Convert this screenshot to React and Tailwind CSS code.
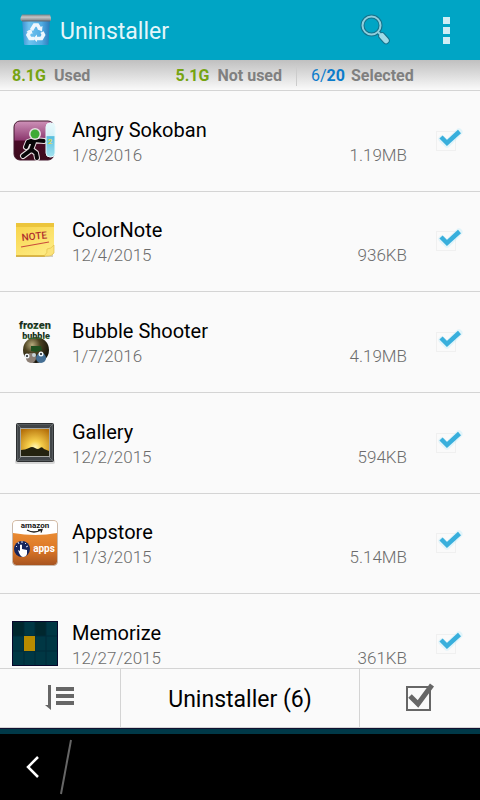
import { useState } from "react";

function TrashIcon() {
  return (
    <svg className="h-8 w-8" viewBox="0 0 32 32" aria-hidden="true">
      <defs>
        <linearGradient id="bin" x1="0" x2="1" y1="0" y2="0">
          <stop offset="0" stopColor="#3a8fd0" />
          <stop offset="0.25" stopColor="#6fc3f0" />
          <stop offset="0.7" stopColor="#4fabe2" />
          <stop offset="1" stopColor="#2a78b8" />
        </linearGradient>
        <linearGradient id="lid" x1="0" x2="0" y1="0" y2="1">
          <stop offset="0" stopColor="#7d8285" />
          <stop offset="0.4" stopColor="#c3c6c8" />
          <stop offset="1" stopColor="#7c8185" />
        </linearGradient>
      </defs>
      <path d="M2 5H30L28.500 30q0 1-1 1H5q-1 0-1-1Z" fill="url(#bin)" />
      <path d="M2 0.500H30L31 4v2q0 1-1 1H1.500L0.500 6V4Z" fill="url(#lid)" />
      <path d="M2 7H30" stroke="#5d6a74" strokeWidth="1" />
      <g fill="none" stroke="#eef7fd" strokeWidth="3.600">
        <path d="m11.500 16 3-5h3l2.500 4" />
        <path d="m22 18 1.500 3-2 3.500h-4.500" />
        <path d="M14 24.500h-4L8 21l2-3.500" />
      </g>
      <path d="m22.500 12-.5 5.500-5-2.500ZM17 20.500v7.500l-4-3.500ZM6.500 17.500l5-2.500 1 5Z" fill="#eef7fd" />
    </svg>
  );
}

function SearchIcon() {
  return (
    <svg className="h-8 w-8" viewBox="0 0 32 32" fill="none" aria-hidden="true">
      <circle cx="11.500" cy="11.500" r="9" stroke="#16718a" strokeWidth="4" />
      <path d="m18 18 4 4" stroke="#16718a" strokeWidth="4" />
      <path d="m22 22 4 4.500" stroke="#16718a" strokeWidth="7.500" strokeLinecap="round" />
      <circle cx="11.500" cy="11.500" r="9" stroke="#8fcfdd" strokeWidth="2" />
      <path d="m18 18 4 4" stroke="#8fcfdd" strokeWidth="2" />
      <path d="m22 22 4 4.500" stroke="#9fdbe8" strokeWidth="5.500" strokeLinecap="round" />
    </svg>
  );
}

function SokobanIcon() {
  return (
    <svg className="h-full w-full" viewBox="0 0 48 48" aria-hidden="true">
      <defs>
        <linearGradient id="wine" x1="0" x2="0" y1="0" y2="1">
          <stop offset="0" stopColor="#cf92b9" />
          <stop offset="0.48" stopColor="#8d3a70" />
          <stop offset="0.52" stopColor="#4a0b27" />
          <stop offset="1" stopColor="#3a0c1c" />
        </linearGradient>
        <linearGradient id="tube" x1="0" x2="0" y1="0" y2="1">
          <stop offset="0" stopColor="#e9f8fb" />
          <stop offset="0.38" stopColor="#d4f2f8" />
          <stop offset="0.4" stopColor="#57bedd" />
          <stop offset="1" stopColor="#a5e3f0" />
        </linearGradient>
      </defs>
      <rect x="4" y="4" width="40" height="39" rx="6" fill="url(#wine)" stroke="#45182f" />
      <g fill="none" strokeLinejoin="round" strokeLinecap="round">
        <path d="m24 25-3 8-8 6M22 33l4 3 1 5M16 30l2-5 6-2 10 1" stroke="#e8e1e3" strokeWidth="6" />
        <path d="m24 25-3 8-8 6M22 33l4 3 1 5M16 30l2-5 6-2 10 1" stroke="#080608" strokeWidth="4" />
      </g>
      <circle cx="25" cy="17" r="6" fill="#eadfe6" />
      <circle cx="25" cy="17" r="4.500" fill="#3faa35" />
      <rect x="36" y="6" width="9" height="34" rx="4" fill="url(#tube)" stroke="#e8fafd" />
      <text x="40" y="27" textAnchor="middle" fontSize="8" fontWeight="700" fill="#ddd84f">2</text>
    </svg>
  );
}

function NoteIcon() {
  return (
    <svg className="h-full w-full" viewBox="0 0 48 48" aria-hidden="true">
      <defs>
        <linearGradient id="paper" x1="0" x2="0.6" y1="0" y2="1">
          <stop offset="0" stopColor="#f8d348" />
          <stop offset="1" stopColor="#fdea80" />
        </linearGradient>
      </defs>
      <path d="M6 39h34l3-3v4H6Z" fill="#b8b19a" opacity="0.6" />
      <path d="M6 6h38v22q-2 7-9 11H6Z" fill="url(#paper)" />
      <path d="M6 6h38v4H6Z" fill="#ecc53c" />
      <path d="M6 39h29" stroke="#d3a92e" strokeWidth="1.500" />
      <path d="M34 39q4-3 3-7 4 0 7-4v8q-2 3-6 3Z" fill="#fbe37a" stroke="#e2c04a" strokeWidth="0.700" />
      <text x="12" y="24" fontSize="10" fontWeight="500" fill="#b0302e" transform="rotate(-6 12 24)">NOTE</text>
      <path d="m11 30 28-5" stroke="#c94c3c" strokeWidth="1.200" />
    </svg>
  );
}

function BubbleIcon() {
  return (
    <svg className="h-full w-full" viewBox="0 0 48 48" aria-hidden="true">
      <defs>
        <radialGradient id="ball" cx="0.35" cy="0.3" r="0.75">
          <stop offset="0" stopColor="#b6aa7d" />
          <stop offset="0.4" stopColor="#4d4322" />
          <stop offset="1" stopColor="#0e0c05" />
        </radialGradient>
        <linearGradient id="slime" x1="0" x2="0" y1="0" y2="1">
          <stop offset="0" stopColor="#101c14" />
          <stop offset="0.6" stopColor="#1d3a22" />
          <stop offset="1" stopColor="#5fae4c" />
        </linearGradient>
      </defs>
      <circle cx="26" cy="32" r="13" fill="url(#ball)" />
      <path d="M21 28h10l1 4-6 2-5-1Z" fill="#1f5020" />
      <ellipse cx="21" cy="40" rx="5" ry="5" fill="#8c7f75" />
      <ellipse cx="31" cy="40" rx="5" ry="5" fill="#456f94" />
      <circle cx="17" cy="38" r="2.500" fill="#eef3f6" />
      <circle cx="24" cy="37" r="2" fill="#c7d4d8" />
      <circle cx="31" cy="36" r="2.500" fill="#eff5f8" />
      <circle cx="17" cy="38" r="1" fill="#101821" />
      <circle cx="31" cy="36" r="1" fill="#101821" />
      <g fontWeight="900" textAnchor="middle" fill="url(#slime)">
        <text x="25" y="11" fontSize="11">frozen</text>
        <text x="26" y="21" fontSize="9">bubble</text>
      </g>
    </svg>
  );
}

function GalleryIcon() {
  return (
    <svg className="h-full w-full" viewBox="0 0 48 48" aria-hidden="true">
      <defs>
        <radialGradient id="sunset" cx="0.5" cy="0.68" r="0.75">
          <stop offset="0" stopColor="#fff8bd" />
          <stop offset="0.3" stopColor="#f7d04c" />
          <stop offset="1" stopColor="#b46f09" />
        </radialGradient>
      </defs>
      <rect x="5" y="40" width="40" height="5" rx="2" fill="#aaa" opacity="0.45" />
      <rect x="6.500" y="4.500" width="37" height="38" rx="1" fill="#555a5d" stroke="#2c2e30" />
      <rect x="8" y="6" width="34" height="35" fill="#414548" />
      <rect x="10.500" y="9.500" width="29" height="28" fill="url(#sunset)" stroke="#a5a6a2" />
      <path d="M11 31q4 0 8-2 3-2 6 0t5 0 4 1l5 2v5H11Z" fill="#24220f" />
      <path d="m7 5 4 4M43 5l-4 4M7 42l4-4M43 42l-4-4" stroke="#777b7e" strokeWidth="0.700" />
    </svg>
  );
}

function AppstoreIcon() {
  return (
    <svg className="h-full w-full" viewBox="0 0 48 48" aria-hidden="true">
      <defs>
        <linearGradient id="orange" x1="0" x2="0" y1="0" y2="1">
          <stop offset="0" stopColor="#f39a3e" />
          <stop offset="0.65" stopColor="#dc7726" />
          <stop offset="1" stopColor="#a65320" />
        </linearGradient>
      </defs>
      <rect x="2.500" y="1.500" width="45" height="45" rx="4" fill="url(#orange)" stroke="#c9b9ac" />
      <path d="M3 5q0-3 3-3h38q3 0 3 3v9q-21 4-44 0Z" fill="#fff" />
      <text x="25" y="9" textAnchor="middle" fontSize="8" fontWeight="700" fill="#151515">amazon</text>
      <path d="M17 11q7 4 14 0m-3 0 4-.5-1 3" fill="none" stroke="#222" strokeWidth="1.300" />
      <circle cx="12" cy="30" r="8" fill="#16265e" />
      <path d="m8 31 2 1v-6q1-1 2 0v4l5 1v4q-1 3-4 3-3 0-5-7Z" fill="#fff" />
      <path d="m6 27 1 1m1-5 1 2m3-3v2m4 0-1 1m3 2-2 1" stroke="#dbe3f5" strokeWidth="1" />
      <text x="34" y="33" textAnchor="middle" fontSize="10" fontWeight="700" fill="#fff">apps</text>
    </svg>
  );
}

function MemorizeIcon() {
  return (
    <svg className="h-full w-full" viewBox="0 0 48 48" aria-hidden="true">
      <rect x="2" y="1" width="46" height="45" fill="#003744" />
      <path d="M3 2h11v14H3ZM25 2h11v14H25Z" fill="#00272e" />
      <path d="M14 2v43M25 2v43M36 2v43M3 16h44M3 31h44" stroke="#002b38" strokeWidth="1" />
      <rect x="2.500" y="1.500" width="45" height="44" fill="none" stroke="#08082c" />
      <rect x="14" y="16" width="11" height="15" fill="#b88b00" />
    </svg>
  );
}

const apps = [
  { name: "Angry Sokoban", date: "1/8/2016", size: "1.19MB", Icon: SokobanIcon },
  { name: "ColorNote", date: "12/4/2015", size: "936KB", Icon: NoteIcon },
  { name: "Bubble Shooter", date: "1/7/2016", size: "4.19MB", Icon: BubbleIcon },
  { name: "Gallery", date: "12/2/2015", size: "594KB", Icon: GalleryIcon },
  { name: "Appstore", date: "11/3/2015", size: "5.14MB", Icon: AppstoreIcon },
  { name: "Memorize", date: "12/27/2015", size: "361KB", Icon: MemorizeIcon },
];

function AppRow({ app, checked, onToggle }) {
  const { Icon } = app;
  return (
    <li className="border-b border-[#d4d4d4]">
      <label className="flex h-full items-center pr-3 pl-2.5">
        <span className="h-12 w-12 shrink-0">
          <Icon />
        </span>
        <span className="ml-3.5 min-w-0 flex-1">
          <span className="block truncate text-[20px] leading-7 text-black">{app.name}</span>
          <span className="flex justify-between text-[17px] leading-[22px] font-light text-[#6c6c6c]">
            <span>{app.date}</span>
            <span>{app.size}</span>
          </span>
        </span>
        <span className="mb-1 ml-[25px] grid h-9 w-9 shrink-0">
          <input
            type="checkbox"
            checked={checked}
            onChange={onToggle}
            className="peer col-start-1 row-start-1 mx-1 my-2.5 h-5 w-5 appearance-none border border-[#f0f0f0]"
          />
          <svg className="pointer-events-none invisible col-start-1 row-start-1 h-9 w-9 peer-checked:visible" viewBox="0 0 36 36" fill="none" aria-hidden="true">
            <path d="m10 18 5 5L27 11" stroke="#c8edfa" strokeWidth="7" opacity="0.5" strokeLinejoin="round" strokeLinecap="round" />
            <path d="m9 16 6 6L27.500 10.500" stroke="#38afdc" strokeWidth="4.500" />
          </svg>
        </span>
      </label>
    </li>
  );
}

export default function App() {
  const [selected, setSelected] = useState(apps.map((app) => app.name));

  const toggle = (name) => {
    setSelected((prev) => (prev.includes(name) ? prev.filter((n) => n !== name) : [...prev, name]));
  };

  const toggleAll = () => {
    setSelected(selected.length === apps.length ? [] : apps.map((app) => app.name));
  };

  return (
    <div className="flex h-screen flex-col bg-[#fafafa] font-[Roboto,'Liberation_Sans',sans-serif]">
      <header className="flex h-15 shrink-0 items-center bg-[#00a5c5] pr-4 pl-5">
        <TrashIcon />
        <h1 className="ml-2 flex-1 pt-1 text-[23px] leading-8 text-[#e4f6fa]">Uninstaller</h1>
        <button type="button" aria-label="Search" className="mr-9">
          <SearchIcon />
        </button>
        <button type="button" aria-label="More options" className="flex w-9 flex-col items-center gap-[3px]">
          <span className="h-[7px] w-[7px] bg-[#cfedf4]" />
          <span className="h-[7px] w-[7px] bg-[#cfedf4]" />
          <span className="h-[7px] w-[7px] bg-[#cfedf4]" />
        </button>
      </header>

      <div className="flex h-[31px] shrink-0 items-center border-b border-[#d4d4d4] bg-linear-to-b from-[#c0c0c0] to-[#fafafa] px-3 pt-0.5 text-[16px] font-bold text-[#808080]">
        <p className="flex flex-1 gap-2">
          <span className="text-[#76a412]">8.1G</span>
          <span>Used</span>
        </p>
        <p className="flex gap-2">
          <span className="text-[#76a412]">5.1G</span>
          <span>Not used</span>
        </p>
        <span className="mx-3.5 h-5 w-px bg-[#cccccc]" />
        <p className="flex w-[157px] gap-1.5">
          <span className="text-[#0b7ccb]">
            <span className="font-normal">{selected.length}/</span>20
          </span>
          <span>Selected</span>
        </p>
      </div>

      <main className="min-h-0 flex-1 overflow-hidden">
        <ul className="grid h-[604px] auto-rows-fr">
          {apps.map((app) => (
            <AppRow
              key={app.name}
              app={app}
              checked={selected.includes(app.name)}
              onToggle={() => toggle(app.name)}
            />
          ))}
        </ul>
      </main>

      <footer className="shrink-0">
        <div className="grid h-15 grid-cols-[1fr_2fr_1fr] border-y border-[#d4d4d4]">
          <button type="button" aria-label="Sort" className="flex items-center justify-center">
            <svg className="h-8 w-8" viewBox="0 0 32 32" fill="#666666" aria-hidden="true">
              <path d="M4 3h3v25L1 23h3ZM12 5h18v4H12ZM12 12h18v4H12ZM12 19h18v4H12Z" />
            </svg>
          </button>
          <button type="button" className="border-x border-[#d4d4d4] pt-1 text-[23px] text-black">
            Uninstaller ({selected.length})
          </button>
          <button type="button" aria-label="Select all" onClick={toggleAll} className="flex items-center justify-center">
            <svg className="h-8 w-8" viewBox="0 0 32 32" fill="none" stroke="#666666" aria-hidden="true">
              <path d="M3 5h23v23H3Z" strokeWidth="2" />
              <path d="m6 14 8 8L28 3" strokeWidth="5" />
            </svg>
          </button>
        </div>
        <div className="h-1.5 border-t border-[#101030] bg-[#003847]" />
        <nav className="flex h-[66px] items-center bg-black pl-3.5">
          <button type="button" aria-label="Back" className="flex h-9 w-9 items-center justify-center">
            <svg className="h-6 w-6" viewBox="0 0 24 24" fill="none" stroke="#ffffff" strokeWidth="2.500" aria-hidden="true">
              <path d="M18 2 8 12l10 10" />
            </svg>
          </button>
          <svg className="ml-2.5 h-14 w-3" viewBox="0 0 12 56" fill="none" stroke="#666666" strokeWidth="2" aria-hidden="true">
            <path d="M11 1 1 55" />
          </svg>
        </nav>
      </footer>
    </div>
  );
}
